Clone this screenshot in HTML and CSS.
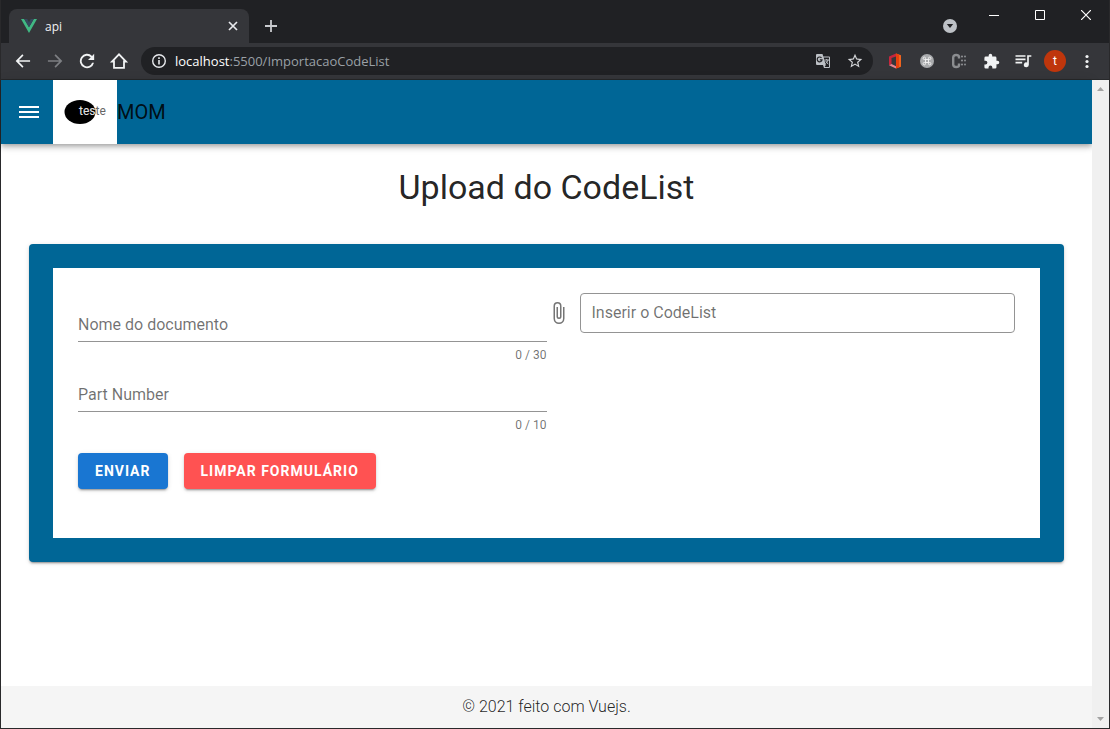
FILE: index.html
```html
<!DOCTYPE html>
<html lang="pt-BR">
<head>
<meta charset="utf-8">
<title>api</title>
<link rel="stylesheet" href="styles.css">
</head>
<body>
<div class="window">
  <header class="tabstrip">
    <div class="tab">
      <svg class="tab-icon" width="16" height="16" viewBox="0 0 16 16"><path fill="#41b883" d="M0 1h3.200L8 9.300 12.800 1H16L8 15z"/><path fill="#35495e" d="M3.200 1h3L8 4.200 9.800 1h3L8 9.300z"/></svg>
      <span class="tab-title">api</span>
      <button class="tab-close" aria-label="Fechar guia"><svg width="10" height="10" viewBox="0 0 10 10"><path d="M1 1l8 8M9 1L1 9" stroke="#e8eaed" stroke-width="1.700"/></svg></button>
    </div>
    <button class="new-tab" aria-label="Nova guia"><svg width="12" height="12" viewBox="0 0 12 12"><path d="M6 0v12M0 6h12" stroke="#c9cbcf" stroke-width="1.800"/></svg></button>
    <div class="window-controls">
      <button class="tab-search" aria-label="Pesquisar guias"><svg width="14" height="14" viewBox="0 0 14 14"><circle cx="7" cy="7" r="7" fill="#bdc1c6"/><path d="M3.800 5h6.400L7 9z" fill="#202124"/></svg></button>
      <button class="control" aria-label="Minimizar"><svg width="10" height="10" viewBox="0 0 10 10"><path d="M0 5.500h10" stroke="#fff"/></svg></button>
      <button class="control" aria-label="Maximizar"><svg width="10" height="10" viewBox="0 0 10 10"><path d="M.5.5h9v9h-9z" fill="none" stroke="#fff"/></svg></button>
      <button class="control" aria-label="Fechar"><svg width="10" height="10" viewBox="0 0 10 10"><path d="M0 0l10 10M10 0L0 10" stroke="#fff" stroke-width="1.200"/></svg></button>
    </div>
  </header>
  <nav class="toolbar">
    <div class="nav-buttons">
      <button aria-label="Voltar"><svg width="20" height="20" viewBox="0 0 24 24"><path fill="#f1f3f4" d="M20.500 11H7l5.600-5.600L11.200 4l-8 8 8 8 1.400-1.400L7 13h13.500z"/></svg></button>
      <button aria-label="Avançar"><svg width="20" height="20" viewBox="0 0 24 24"><path fill="#7d7f83" d="M3.500 11H17l-5.600-5.600L12.800 4l8 8-8 8-1.400-1.400L17 13H3.500z"/></svg></button>
      <button aria-label="Recarregar"><svg width="20" height="20" viewBox="0 0 24 24"><path fill="#f1f3f4" d="M18.100 5.900A8.600 8.600 0 1 0 20.400 14h-2.300A6.400 6.400 0 1 1 16.500 7.500L13.200 10.800H20.600V3.400z"/></svg></button>
      <button aria-label="Página inicial"><svg width="20" height="20" viewBox="0 0 20 20"><path fill="none" stroke="#f1f3f4" stroke-width="1.800" d="M3 10.500H5v6.300h10V10.500h2L10 3.300z"/></svg></button>
    </div>
    <div class="omnibox">
      <svg width="16" height="16" viewBox="0 0 16 16"><circle cx="8" cy="8" r="6.300" fill="none" stroke="#e8eaed" stroke-width="1.400"/><path d="M8 7v4.500M8 4.300V6" stroke="#e8eaed" stroke-width="1.600"/></svg>
      <span class="url"><span class="host">localhost</span>:5500/ImportacaoCodeList</span>
      <button aria-label="Traduzir"><svg width="16" height="16" viewBox="0 0 16 16"><path fill="#bdc1c6" d="M2 1h5.500l.8 2.500H14a1 1 0 0 1 1 1V14a1 1 0 0 1-1 1H9l-1-3H2a1 1 0 0 1-1-1V2a1 1 0 0 1 1-1z"/><path fill="#202124" d="M8.700 4.500H14V14H9.700l1.100-2z"/><path fill="none" stroke="#202124" stroke-width="1.200" d="M6.500 4.900A2.400 2.400 0 1 0 7 6.800H4.800"/><path fill="none" stroke="#bdc1c6" d="M9.500 7H14M11.700 6v1M13 7c-.5 2-1.500 3-2.500 3.500M10.800 8c.4 1.200 1.400 2.400 2.500 3"/></svg></button>
      <button aria-label="Favoritar"><svg width="16" height="16" viewBox="1 1 22 22"><path fill="#d5d7da" d="M22 9.200l-7.200-.6L12 2 9.200 8.600 2 9.200l5.500 4.700L5.800 21 12 17.300 18.200 21l-1.600-7.100zM12 15.400l-3.800 2.300 1-4.300-3.300-2.900 4.400-.4L12 6.100l1.700 4 4.400.4-3.300 2.900 1 4.300z"/></svg></button>
    </div>
    <div class="extensions">
      <button aria-label="Office"><svg width="16" height="16" viewBox="0 0 16 16"><path fill="#f0641e" d="M9 .5l5 1.700v11.600l-5 1.700z"/><path fill="#e8400c" d="M9 .5l3 1v13l-3 1z"/><path fill="#c7263d" d="M9 .5L2 3.600v8.700L4.500 11V5L9 3.400z"/><path fill="#e78592" d="M2 12.300L4.500 11 9 13.200v2.300z"/></svg></button>
      <button aria-label="Atalhos"><svg width="16" height="16" viewBox="0 0 16 16"><circle cx="8" cy="8" r="7" fill="#a9abad"/><path fill="none" stroke="#eee" stroke-width="1" d="M6.500 6.500v-1A1.200 1.200 0 1 0 5.300 6.500h5.400A1.200 1.200 0 1 0 9.500 5.300v5.400A1.200 1.200 0 1 0 10.700 9.500H5.300A1.200 1.200 0 1 0 6.500 10.700z"/></svg></button>
      <button aria-label="CodeList"><svg width="16" height="16" viewBox="0 0 16 16"><path fill="none" stroke="#8b8d90" stroke-width="2.400" d="M8 5.500V4Q8 2 5.200 2T2.200 4.500v7q0 2.500 3 2.500T8 12v-1.500"/><g fill="#8b8d90"><circle cx="11" cy="3.500" r="1.100"/><circle cx="14" cy="3.500" r="1"/><circle cx="11" cy="7.500" r="1.100"/><circle cx="14" cy="7.500" r="1"/><circle cx="11" cy="11.500" r="1.100"/><circle cx="14" cy="11.500" r="1"/></g></svg></button>
      <button aria-label="Extensões"><svg width="17" height="17" viewBox="0 0 24 24"><path fill="#f1f3f4" d="M20.500 11H19V7a2 2 0 0 0-2-2h-4V3.500a2.500 2.500 0 0 0-5 0V5H4a2 2 0 0 0-2 2v3.800h1.500a2.700 2.700 0 0 1 0 5.400H2V20a2 2 0 0 0 2 2h3.800v-1.500a2.700 2.700 0 0 1 5.400 0V22H17a2 2 0 0 0 2-2v-4h1.500a2.500 2.500 0 0 0 0-5z"/></svg></button>
      <button aria-label="Controle de mídia"><svg width="20" height="20" viewBox="0 0 24 24"><path fill="#f1f3f4" d="M3 5h12v2H3zM3 9h12v2H3zM3 13h8v2H3zM17 5h5v2h-3v9.500a3 3 0 1 1-2-2.800z"/></svg></button>
      <button class="avatar" aria-label="Perfil">t</button>
      <button aria-label="Menu"><svg width="16" height="16" viewBox="0 0 16 16"><g fill="#f1f3f4"><circle cx="8" cy="3.500" r="1.600"/><circle cx="8" cy="8.500" r="1.600"/><circle cx="8" cy="13.500" r="1.600"/></g></svg></button>
    </div>
  </nav>
  <div class="viewport">
    <div class="page">
      <header class="app-bar">
        <button class="menu-button" aria-label="Abrir menu"><svg width="24" height="24" viewBox="0 0 24 24"><path fill="#fff" d="M2 6h20v2H2zM2 11h20v2H2zM2 16h20v2H2z"/></svg></button>
        <svg class="logo" width="64" height="64" viewBox="0 0 64 64"><path fill="#fff" d="M0 0h64v64H0z"/><ellipse cx="27" cy="32" rx="15.500" ry="12"/><defs><clipPath id="disc"><ellipse cx="27" cy="32" rx="15.500" ry="12"/></clipPath></defs><text class="logo-text" x="26" y="35">teste</text><text class="logo-text logo-text-light" x="26" y="35" clip-path="url(#disc)" aria-hidden="true">teste</text></svg>
        <span class="app-name">MOM</span>
      </header>
      <main class="content">
        <h1 class="title">Upload do CodeList</h1>
        <section class="card">
          <form class="form">
            <div class="column">
              <div class="field">
                <div class="field-control"><input id="nome" type="text" maxlength="30" placeholder=" "><label for="nome">Nome do documento</label></div>
                <span class="counter">0 / 30</span>
              </div>
              <div class="field">
                <div class="field-control"><input id="part" type="text" maxlength="10" placeholder=" "><label for="part">Part Number</label></div>
                <span class="counter">0 / 10</span>
              </div>
              <div class="actions">
                <button class="btn btn-primary" type="submit">ENVIAR</button>
                <button class="btn btn-error" type="reset">LIMPAR FORMULÁRIO</button>
              </div>
            </div>
            <div class="column file-field">
              <svg width="24" height="24" viewBox="0 0 24 24"><path fill="#757575" d="M16 6V17.500A4 4 0 0 1 8 17.500V5A2.500 2.500 0 0 1 13 5V15.500A1 1 0 0 1 11 15.500V6H9.500V15.500A2.500 2.500 0 0 0 14.500 15.500V5A4 4 0 0 0 6.500 5V17.500A5.500 5.500 0 0 0 17.500 17.500V6z"/></svg>
              <div class="file-control"><label for="arquivo">Inserir o CodeList</label><input id="arquivo" type="file"></div>
            </div>
          </form>
        </section>
      </main>
      <footer class="footer">© 2021 feito com Vuejs.</footer>
    </div>
    <div class="scrollbar">
      <svg width="7" height="4" viewBox="0 0 7 4"><path fill="#a3a3a3" d="M0 4L3.500 0 7 4z"/></svg>
      <svg width="7" height="4" viewBox="0 0 7 4"><path fill="#a3a3a3" d="M0 0l3.500 4L7 0z"/></svg>
    </div>
  </div>
</div>
</body>
</html>
```
FILE: styles.css
```css
* { box-sizing: border-box; }

body {
  margin: 0;
  font-family: Roboto, "Liberation Sans", sans-serif;
  font-size: 16px;
  color: rgba(0, 0, 0, 0.87);
}

button {
  padding: 0;
  border: 0;
  background: none;
  font-family: inherit;
  cursor: pointer;
}

svg { display: block; flex: none; }

.window {
  display: flex;
  flex-direction: column;
  min-height: 100vh;
  border: 1px solid #29292b;
  border-top: 0;
  background: #35363a;
  font-family: "Open Sans", sans-serif;
}

/* Tab strip */
.tabstrip {
  display: flex;
  height: 43px;
  padding-left: 8px;
  background: #202124;
}

.tab {
  display: flex;
  align-items: center;
  gap: 8px;
  width: 240px;
  margin-top: 9px;
  padding: 0 11px 0 12px;
  border-radius: 8px 8px 0 0;
  background: #35363a;
  color: #f1f3f4;
  font-size: 12px;
}

.tab-title { flex: 1; }
.new-tab { width: 44px; display: grid; place-items: center; padding-top: 9px; }
.window-controls { display: flex; margin-left: auto; height: 30px; }
.tab-search { padding: 22px 14px 0 0; align-self: center; }
.control { width: 46px; display: grid; place-items: center; }

/* Address row */
.toolbar {
  display: flex;
  align-items: center;
  height: 37px;
  padding: 0 6px;
  border-bottom: 1px solid #28292b;
}

.nav-buttons, .extensions { display: flex; align-items: center; }
.nav-buttons button, .extensions button { width: 32px; height: 28px; display: grid; place-items: center; }
.extensions { margin-left: 6px; }

.omnibox {
  flex: 1;
  display: flex;
  align-items: center;
  gap: 16px;
  height: 28px;
  margin-left: 6px;
  padding: 0 10px;
  border-radius: 14px;
  background: #202124;
}

.url { flex: 1; margin-left: -8px; font-size: 13px; color: #9aa0a6; }
.host { color: #fff; }

.extensions .avatar {
  width: 22px;
  height: 22px;
  margin: 0 5px;
  border-radius: 50%;
  background: #bf360c;
  color: #fff;
  font-family: Roboto, sans-serif;
  font-size: 12px;
}

/* Page area */
.viewport {
  flex: 1;
  display: flex;
  font-family: Roboto, "Liberation Sans", sans-serif;
}

.page {
  flex: 1;
  display: flex;
  flex-direction: column;
  background: #fff;
}

.scrollbar {
  display: flex;
  flex-direction: column;
  justify-content: space-between;
  align-items: center;
  width: 17px;
  padding: 7px 0;
  background: #f0f0f0;
}

.app-bar {
  display: flex;
  align-items: center;
  height: 64px;
  background: #006696;
  box-shadow: 0 2px 4px -1px rgba(0, 0, 0, 0.2), 0 4px 5px 0 rgba(0, 0, 0, 0.14), 0 1px 10px 0 rgba(0, 0, 0, 0.12);
}

.menu-button { padding: 0 12px 0 16px; }
.logo-text { font-size: 12px; font-weight: 400; fill: #666; }
.logo-text-light { fill: #ddd; }
.app-name { font-size: 20px; }

.content { flex: 1; padding: 19px 28px; }

.title {
  margin: 0 0 33px;
  font-size: 34px;
  font-weight: 400;
  line-height: 48px;
  text-align: center;
}

.card {
  padding: 24px;
  border-radius: 4px;
  background: #006696;
  box-shadow: 0 3px 1px -2px rgba(0, 0, 0, 0.2), 0 2px 2px 0 rgba(0, 0, 0, 0.14), 0 1px 5px 0 rgba(0, 0, 0, 0.12);
}

.form {
  display: grid;
  grid-template-columns: 1fr 1fr;
  padding: 25px 25px 49px;
  background: #fff;
}

.field { height: 70px; padding-top: 16px; }

.field-control { position: relative; }

.field-control input {
  display: block;
  width: 100%;
  height: 33px;
  padding: 0;
  border: 0;
  border-bottom: 1px solid #949494;
  outline: 0;
  background: none;
  font: inherit;
}

.field-control label {
  position: absolute;
  left: 0;
  top: 6px;
  line-height: 20px;
  color: rgba(0, 0, 0, 0.56);
  pointer-events: none;
}

.field-control input:not(:placeholder-shown) + label { display: none; }

.counter {
  display: block;
  margin-top: 7px;
  font-size: 12px;
  line-height: 12px;
  text-align: right;
  color: rgba(0, 0, 0, 0.56);
}

.actions { display: flex; gap: 16px; margin-top: 20px; }

.btn {
  height: 36px;
  padding: 0 17px;
  border-radius: 4px;
  color: #fff;
  font-size: 14px;
  font-weight: 700;
  letter-spacing: 1px;
  box-shadow: 0 3px 1px -2px rgba(0, 0, 0, 0.2), 0 2px 2px 0 rgba(0, 0, 0, 0.14), 0 1px 5px 0 rgba(0, 0, 0, 0.12);
}

.btn-primary { background: #1976d2; }
.btn-error { background: #ff5252; }

.file-field { display: flex; gap: 9px; }
.file-field svg { margin-top: 8px; }

.file-control {
  position: relative;
  flex: 1;
  height: 40px;
  padding: 0 11px;
  border: 1px solid #949494;
  border-radius: 4px;
  line-height: 38px;
  color: rgba(0, 0, 0, 0.56);
}

.file-control input {
  position: absolute;
  inset: 0;
  width: 100%;
  opacity: 0;
}

.footer {
  padding: 11px 16px;
  background: #f5f5f5;
  font-weight: 300;
  line-height: 20px;
  text-align: center;
}
```
